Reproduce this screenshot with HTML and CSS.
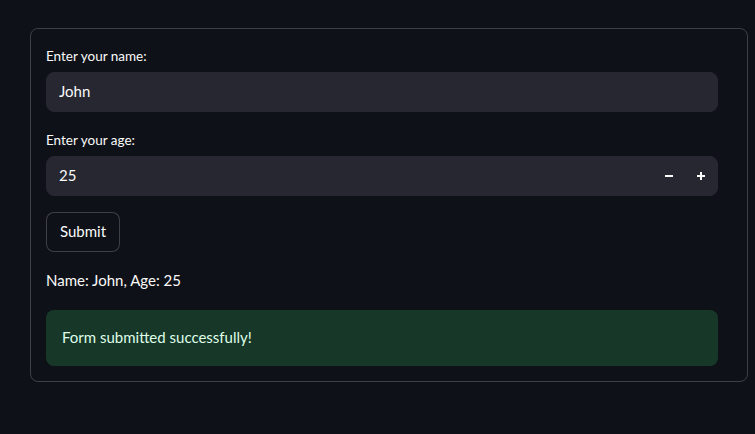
FILE: index.html
```html
<!DOCTYPE html>
<html lang="en">
<head>
    <meta charset="UTF-8">
    <meta name="viewport" content="width=device-width, initial-scale=1.0">
    <title>Form</title>
    <link rel="stylesheet" href="styles.css">
</head>
<body>
    <div class="main">
        <form class="form-box">
            <div class="field">
                <label class="field-label" for="name">Enter your name:</label>
                <input class="text-input" type="text" id="name" value="John">
            </div>

            <div class="field">
                <label class="field-label" for="age">Enter your age:</label>
                <div class="number-input">
                    <input type="text" id="age" value="25">
                    <button type="button" class="step-btn" aria-label="decrement">
                        <svg width="10" height="10" viewBox="0 0 10 10"><path d="M1 5h8" stroke="#fafafa" stroke-width="2"/></svg>
                    </button>
                    <button type="button" class="step-btn" aria-label="increment">
                        <svg width="10" height="10" viewBox="0 0 10 10"><path d="M1 5h8M5 1v8" stroke="#fafafa" stroke-width="2"/></svg>
                    </button>
                </div>
            </div>

            <div>
                <button type="button" class="submit-btn">Submit</button>
            </div>

            <p class="result">Name: John, Age: 25</p>

            <div class="alert-success">Form submitted successfully!</div>
        </form>
    </div>
</body>
</html>
```

FILE: styles.css
```css
body {
    margin: 0;
    background-color: #0e1117;
    color: #fafafa;
    font-family: "Source Sans Pro", Lato, "Noto Sans", sans-serif;
}

.main {
    padding: 28px 7px 0 30px;
}

.form-box {
    display: flex;
    flex-direction: column;
    gap: 16px;
    border: 1px solid rgba(250, 250, 250, 0.2);
    border-radius: 8px;
    padding: 15px 29px 15px 15px;
}

.field-label {
    display: flex;
    align-items: center;
    min-height: 24px;
    margin-bottom: 4px;
    padding-bottom: 1px;
    box-sizing: border-box;
    font-size: 13.5px;
}

.text-input,
.number-input {
    box-sizing: border-box;
    width: 100%;
    height: 40px;
    background-color: #262730;
    border: 1px solid #262730;
    border-radius: 8px;
}

.text-input,
.number-input input {
    font-family: inherit;
    font-size: 15px;
    color: #fafafa;
    padding: 0 12px 3px;
    outline: none;
}

.number-input {
    display: flex;
}

.number-input input {
    flex: 1;
    min-width: 0;
    background: transparent;
    border: none;
}

.step-btn {
    width: 32px;
    height: 100%;
    background: transparent;
    border: none;
    display: flex;
    align-items: center;
    justify-content: center;
    padding: 0;
}

.submit-btn {
    font-family: inherit;
    font-size: 15px;
    color: #fafafa;
    background-color: #0e1117;
    border: 1px solid rgba(250, 250, 250, 0.2);
    border-radius: 8px;
    height: 40px;
    padding: 0 13px 3px;
}

.result {
    margin: 0 0 2px;
    font-size: 15px;
    line-height: 24px;
}

.alert-success {
    background-color: rgba(61, 213, 109, 0.2);
    color: #dffde9;
    border-radius: 8px;
    padding: 15px 16px 17px;
    font-size: 15px;
    line-height: 24px;
}
```
